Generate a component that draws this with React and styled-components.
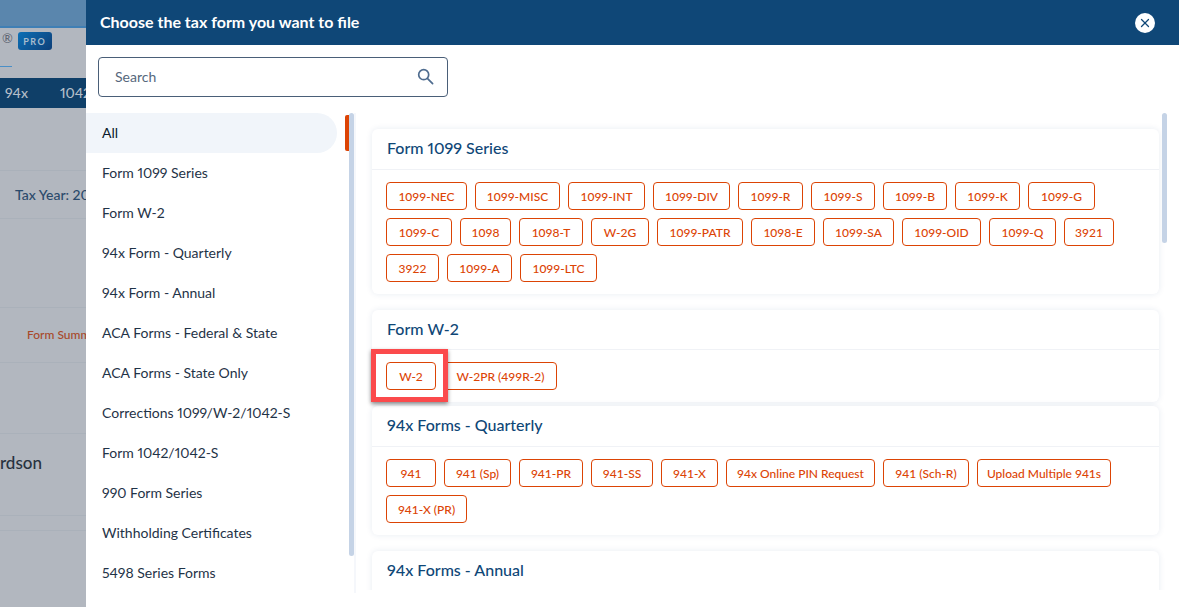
import React from "react";
import styled, { createGlobalStyle } from "styled-components";
import { X } from "lucide-react";

const FONT = `"Lato", "Noto Sans", sans-serif`;

const GlobalStyle = createGlobalStyle`
  html, body {
    margin: 0;
    padding: 0;
    height: 100%;
    overflow: hidden;
    font-family: ${FONT};
    font-variant-numeric: proportional-nums;
  }
  * { box-sizing: border-box; }
`;

const NAV_ITEMS = [
  "All",
  "Form 1099 Series",
  "Form W-2",
  "94x Form - Quarterly",
  "94x Form - Annual",
  "ACA Forms - Federal & State",
  "ACA Forms - State Only",
  "Corrections 1099/W-2/1042-S",
  "Form 1042/1042-S",
  "990 Form Series",
  "Withholding Certificates",
  "5498 Series Forms",
];

const SECTIONS = [
  {
    title: "Form 1099 Series",
    chips: [
      ["1099-NEC", 81], ["1099-MISC", 85], ["1099-INT", 77], ["1099-DIV", 77], ["1099-R", 65],
      ["1099-S", 64], ["1099-B", 64], ["1099-K", 65], ["1099-G", 67],
      ["1099-C", 66], ["1098", 51], ["1098-T", 64], ["W-2G", 58], ["1099-PATR", 86], ["1098-E", 64],
      ["1099-SA", 71], ["1099-OID", 79], ["1099-Q", 67], ["3921", 50],
      ["3922", 53], ["1099-A", 65], ["1099-LTC", 77],
    ],
  },
  {
    title: "Form W-2",
    tight: true,
    chips: [["W-2", 50, true], ["W-2PR (499R-2)", 113]],
  },
  {
    title: "94x Forms - Quarterly",
    chips: [
      ["941", 50], ["941 (Sp)", 67], ["941-PR", 64], ["941-SS", 62], ["941-X", 57],
      ["94x Online PIN Request", 149], ["941 (Sch-R)", 86], ["Upload Multiple 941s", 134],
      ["941-X (PR)", 81],
    ],
  },
  { title: "94x Forms - Annual", chips: [] },
];

const Page = styled.div`
  position: relative;
  width: 1179px;
  height: 607px;
  overflow: hidden;
  background: #b2b7bf;
`;

/* the dimmed app that sits behind the drawer */
const TopStrip = styled.div`
  height: 28px;
  background: #5a86ad;
  border-bottom: 2px solid #3f7fb5;
`;
const BrandRow = styled.div`
  height: 30px;
  display: flex;
  align-items: flex-start;
  padding: 4px 0 0 2px;
  gap: 5px;
  color: #5c6470;
  font-size: 13px;
  line-height: 13px;
`;
const ProBadge = styled.span`
  width: 34px;
  height: 18px;
  display: flex;
  align-items: center;
  justify-content: center;
  border-radius: 3px;
  background: linear-gradient(135deg, #0c70b6, #0e3f78);
  color: #a9bccd;
  font-size: 9px;
  font-weight: 700;
  letter-spacing: 1.6px;
`;
const TabLine = styled.div`
  width: 12px;
  height: 1px;
  margin: 8px 0 11px;
  background: #4a8fc7;
`;
const NavBar = styled.div`
  height: 30px;
  display: flex;
  align-items: center;
  gap: 32px;
  padding: 0 0 2px 5px;
  background: #0f3f68;
  color: #b4bec9;
  font-size: 14px;
  font-weight: 500;
`;
const BackRow = styled.div`
  height: ${(p) => p.$h}px;
  display: flex;
  align-items: center;
  justify-content: ${(p) => (p.$end ? "flex-end" : "flex-start")};
  width: ${(p) => (p.$end ? "42px" : "auto")};
  padding-left: ${(p) => p.$left || 0}px;
  padding-bottom: ${(p) => p.$lift || 0}px;
  white-space: nowrap;
  color: ${(p) => p.$color || "#2b4a6b"};
  font-size: ${(p) => p.$size || 14}px;
  font-weight: 500;
`;
const BackRule = styled.div`
  height: 1px;
  background: #aab1ba;
`;

const Drawer = styled.aside`
  position: absolute;
  top: 0;
  right: 0;
  bottom: 0;
  left: 86px;
  display: flex;
  flex-direction: column;
  background: #fff;
`;
const Header = styled.header`
  height: 45px;
  flex: none;
  display: flex;
  align-items: center;
  justify-content: space-between;
  padding: 0 24px 2px 14px;
  background: #0f4777;
  color: #fff;
  font-size: 16px;
  font-weight: 700;
`;
const CloseButton = styled.button`
  width: 20px;
  height: 20px;
  margin-top: 2px;
  padding: 0;
  display: flex;
  align-items: center;
  justify-content: center;
  border: 0;
  border-radius: 50%;
  background: #fff;
  color: #0f4777;
`;
const SearchRow = styled.div`
  flex: none;
  padding: 12px 12px 16px;
`;
const SearchBox = styled.div`
  width: 350px;
  height: 40px;
  display: flex;
  align-items: center;
  justify-content: space-between;
  padding: 0 13px 2px 16px;
  border: 1px solid #4a5f78;
  border-radius: 4px;
  color: #56677c;
  font-size: 14px;
`;
const Body = styled.div`
  height: 480px;
  display: flex;
`;
const NavColumn = styled.nav`
  position: relative;
  width: 270px;
  flex: none;
  padding-right: 17px;
  border-right: 2px solid #f5f7fb;
  overflow: hidden;
`;
const NavItem = styled.div`
  height: 40px;
  display: flex;
  align-items: center;
  padding: 0 0 2px 16px;
  border-radius: 0 20px 20px 0;
  background: ${(p) => (p.$active ? "#f1f5fa" : "transparent")};
  color: ${(p) => (p.$active ? "#0b1a2a" : "#1f3347")};
  font-size: 14px;
`;
const ScrollThumb = styled.div`
  position: absolute;
  top: 0;
  right: ${(p) => p.$right}px;
  width: 5px;
  height: ${(p) => p.$h}px;
  border-radius: 3px;
  background: #c5d3e6;
`;
const ActiveMarker = styled.div`
  position: absolute;
  top: 2px;
  right: 5px;
  width: 4px;
  height: 36px;
  border-radius: 2px 0 0 2px;
  background: #dc4405;
`;
const FormsColumn = styled.div`
  position: relative;
  flex: 1;
  height: 477px;
  padding: 16px 20px 0 16px;
  overflow: hidden;
`;
const Card = styled.section`
  margin-bottom: ${(p) => (p.$tight ? 4 : 16)}px;
  border-radius: 6px;
  background: #fff;
  box-shadow: 0 0 6px rgba(30, 70, 130, 0.1);
`;
const CardTitle = styled.h3`
  height: ${(p) => (p.$tight ? 40 : 41)}px;
  margin: 0;
  padding: 0 0 ${(p) => (p.$tight ? 2 : 4)}px 15px;
  display: flex;
  align-items: center;
  border-bottom: 1px solid #f0f2f6;
  color: #0f4777;
  font-size: 16px;
  font-weight: 500;
`;
const ChipWrap = styled.div`
  display: flex;
  flex-wrap: wrap;
  gap: 8px;
  padding: 12px 14px;
`;
const Chip = styled.button`
  position: relative;
  width: ${(p) => p.$w}px;
  height: 28px;
  padding: 0;
  border: 1px solid #dc4405;
  border-radius: 4px;
  background: #fff;
  color: #dc4405;
  font-family: inherit;
  font-size: 12px;
  font-weight: 500;
  white-space: nowrap;
  &::after {
    content: "";
    display: ${(p) => (p.$marked ? "block" : "none")};
    box-sizing: border-box;
    position: absolute;
    z-index: 1;
    top: -14px;
    left: -16px;
    width: 77px;
    height: 53px;
    border: 5px solid #fb4a4c;
    box-shadow: 0 2px 4px rgba(0, 0, 0, 0.45);
  }
`;
const SearchIcon = styled.svg`
  width: 17px;
  height: 17px;
  fill: none;
  stroke: #4f6c8f;
  stroke-width: 1.7;
  stroke-linecap: round;
`;

export default function App() {
  return (
    <Page>
      <GlobalStyle />
      <TopStrip />
      <BrandRow>
        <span>®</span>
        <ProBadge>PRO</ProBadge>
      </BrandRow>
      <TabLine />
      <NavBar>
        <span>94x</span>
        <span>1042</span>
      </NavBar>
      <BackRow $h={62} />
      <BackRule />
      <BackRow $h={47} $left={15} $lift={1}>Tax Year: 2024</BackRow>
      <BackRule />
      <BackRow $h={88} />
      <BackRule />
      <BackRow $h={54} $left={27} $size={12} $lift={2} $color="#a8492a">Form Summary</BackRow>
      <BackRule />
      <BackRow $h={70} />
      <BackRule />
      <BackRow $h={81} $end $size={17} $lift={24} $color="#28323e">rdson</BackRow>
      <BackRule />
      <BackRow $h={14} />
      <BackRule />
      <Drawer>
        <Header>
          <span>Choose the tax form you want to file</span>
          <CloseButton aria-label="Close">
            <X size={14} strokeWidth={2.25} />
          </CloseButton>
        </Header>
        <SearchRow>
          <SearchBox>
            <span>Search</span>
            <SearchIcon viewBox="0 0 17 17">
              <circle cx="6.7" cy="6.7" r="5" />
              <path d="M10.6 10.6L15.6 15.6" />
            </SearchIcon>
          </SearchBox>
        </SearchRow>
        <Body>
          <NavColumn>
            {NAV_ITEMS.map((item, i) => (
              <NavItem key={item} $active={i === 0}>{item}</NavItem>
            ))}
            <ActiveMarker />
            <ScrollThumb $right={0} $h={443} />
          </NavColumn>
          <FormsColumn>
            {SECTIONS.map((section) => (
              <Card key={section.title} $tight={section.tight}>
                <CardTitle $tight={section.tight}>{section.title}</CardTitle>
                <ChipWrap>
                  {section.chips.map(([label, w, marked]) => (
                    <Chip key={label} $w={w} $marked={marked}>{label}</Chip>
                  ))}
                </ChipWrap>
              </Card>
            ))}
            <ScrollThumb $right={12} $h={130} />
          </FormsColumn>
        </Body>
      </Drawer>
    </Page>
  );
}
